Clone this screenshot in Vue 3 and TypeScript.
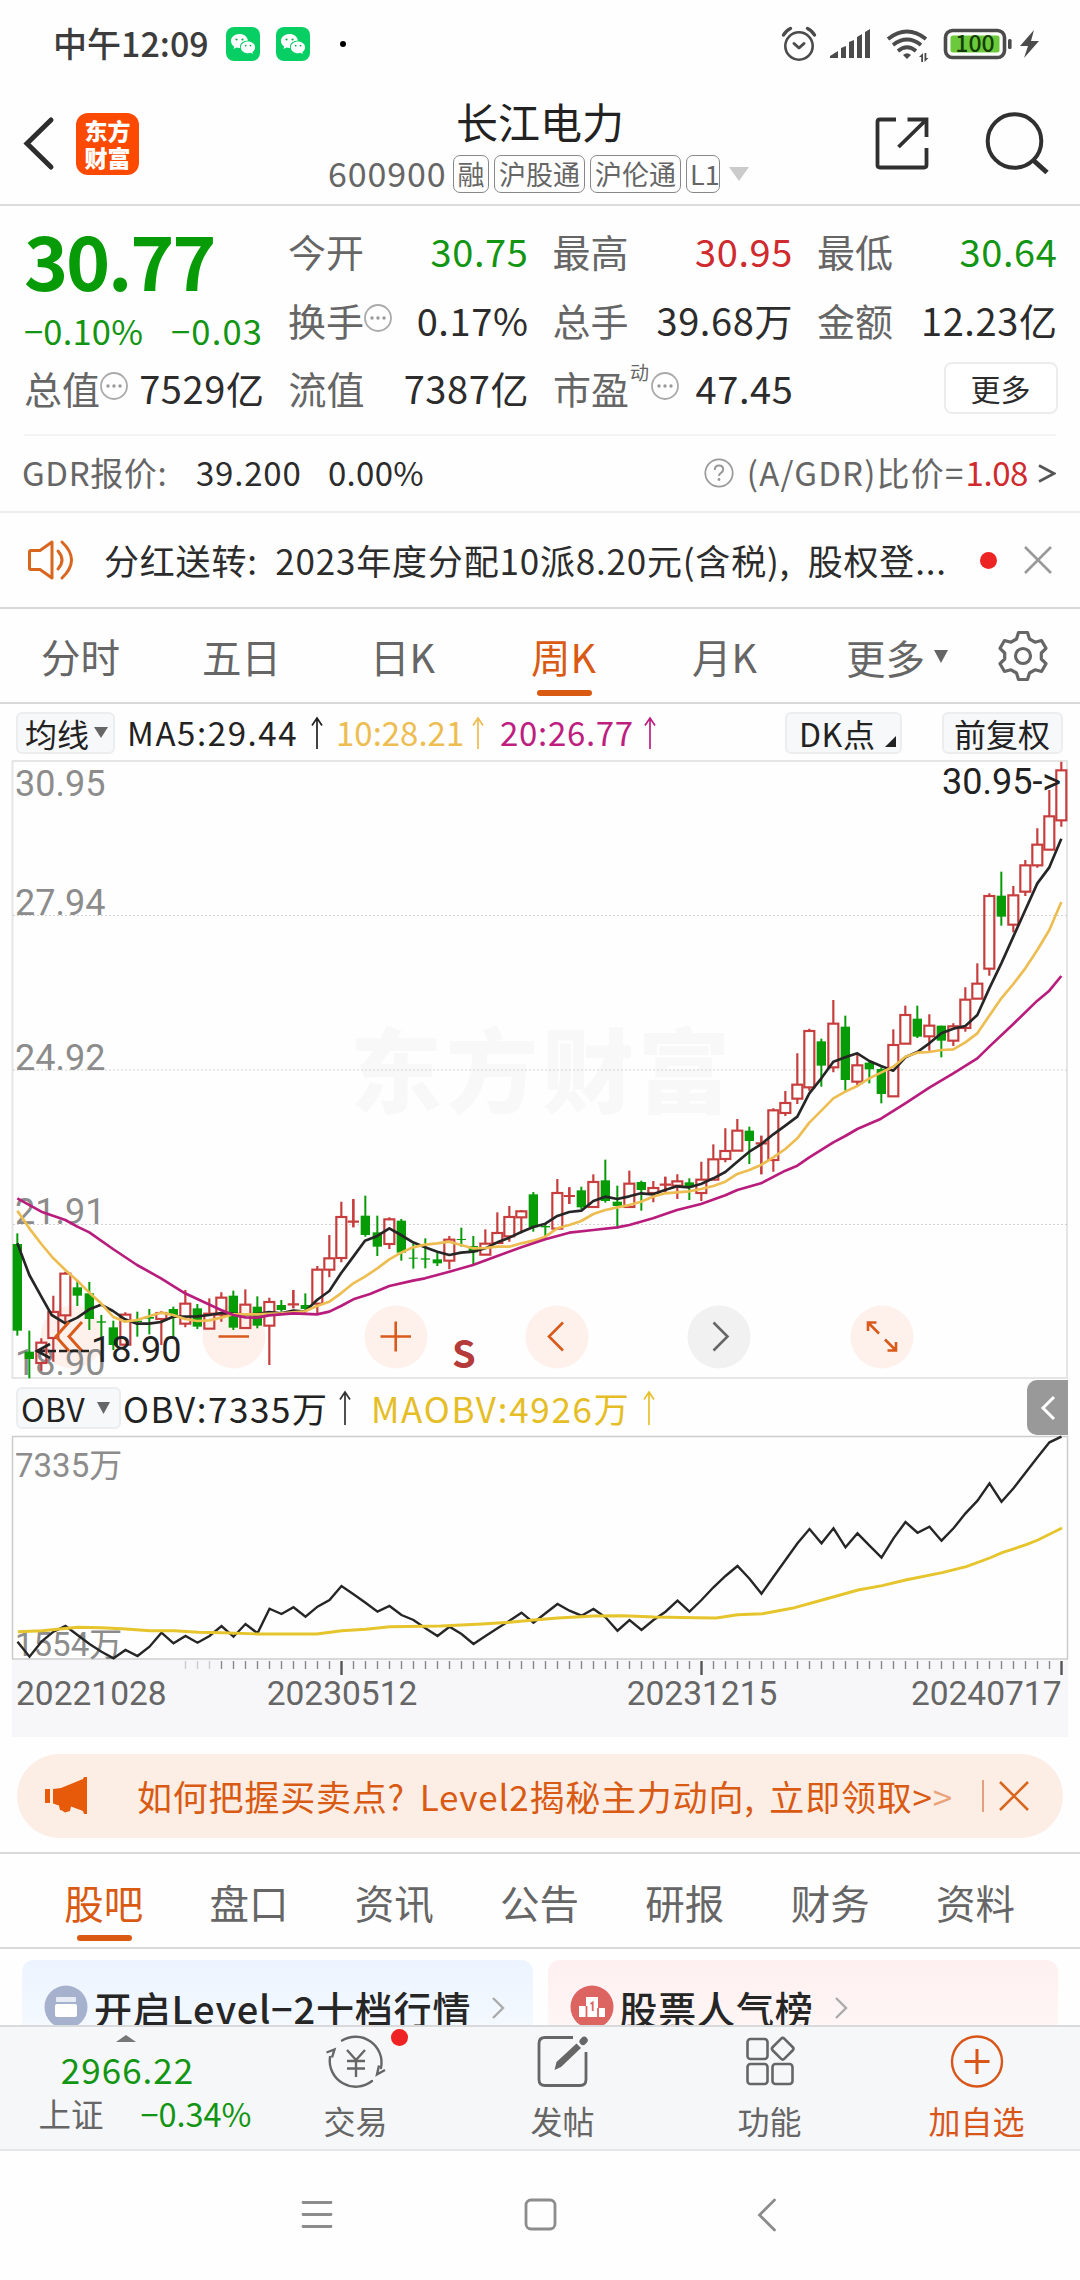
<script setup lang="ts">
type Candle = [kind: 0 | 1, high: number, top: number, bottom: number, low: number]

// kind 1 = rising week (hollow red), 0 = falling week (solid green); values are thirds of a pixel below y = 1000
const candles: Candle[] = [
  [0, 700, 732, 992, 1007], [0, 992, 1055, 1077, 1135], [1, 1015, 1027, 1090, 1112], [1, 887, 935, 1015, 1085],
  [1, 815, 820, 947, 965], [0, 842, 862, 887, 918], [0, 846, 880, 957, 990], [0, 945, 964, 968, 1020],
  [0, 962, 982, 1035, 1050], [1, 937, 943, 1035, 1040], [0, 935, 962, 966, 1010], [0, 927, 951, 956, 1003],
  [1, 933, 938, 958, 1035], [0, 920, 927, 945, 1010], [1, 870, 910, 972, 982], [0, 912, 925, 980, 987],
  [1, 895, 940, 987, 987], [1, 877, 892, 945, 965], [0, 872, 887, 983, 990], [1, 868, 913, 985, 985],
  [0, 889, 920, 977, 985], [1, 893, 905, 978, 1095], [0, 900, 915, 930, 935], [1, 870, 911, 917, 925],
  [0, 880, 915, 927, 930], [1, 798, 808, 912, 945], [1, 705, 774, 810, 832], [1, 605, 650, 775, 787],
  [1, 597, 663, 667, 682], [0, 587, 647, 705, 710], [0, 647, 697, 740, 768], [1, 652, 657, 733, 747],
  [0, 657, 662, 758, 782], [0, 730, 773, 776, 806], [0, 715, 775, 779, 805], [0, 757, 778, 790, 798],
  [1, 708, 718, 783, 808], [0, 683, 717, 720, 740], [0, 708, 738, 757, 793], [1, 688, 730, 765, 765],
  [1, 637, 698, 730, 730], [1, 618, 650, 710, 725], [1, 630, 633, 653, 700], [0, 576, 583, 682, 695],
  [0, 672, 678, 682, 715], [1, 537, 578, 687, 687], [1, 562, 586, 590, 612], [0, 560, 571, 622, 628],
  [1, 523, 545, 622, 622], [0, 479, 541, 603, 608], [0, 557, 605, 618, 685], [1, 512, 550, 622, 622],
  [0, 542, 546, 570, 632], [1, 543, 563, 580, 607], [1, 530, 552, 557, 578], [1, 523, 543, 558, 597],
  [0, 535, 547, 562, 600], [1, 485, 538, 580, 603], [1, 433, 477, 540, 540], [1, 385, 452, 478, 487],
  [1, 357, 391, 453, 453], [0, 380, 392, 423, 492], [1, 407, 428, 432, 523], [1, 325, 330, 481, 515],
  [1, 273, 308, 340, 348], [1, 160, 253, 297, 312], [1, 86, 92, 263, 272], [0, 116, 124, 197, 260],
  [1, 0, 70, 203, 217], [0, 47, 80, 240, 272], [1, 162, 195, 246, 260], [0, 185, 188, 208, 250],
  [0, 202, 207, 282, 310], [1, 88, 134, 290, 290], [1, 17, 44, 132, 132], [0, 17, 56, 110, 114],
  [1, 43, 76, 110, 152], [0, 77, 77, 122, 172], [1, 70, 78, 123, 138], [1, -38, -2, 85, 95],
  [1, -110, -50, -3, -3], [1, -320, -313, -93, -73], [0, -385, -313, -250, -223], [1, -342, -315, -225, -203],
  [1, -420, -405, -324, -312], [1, -515, -467, -403, -397], [1, -630, -552, -450, -450], [1, -715, -690, -538, -520],
]
const cx = (i: number): number => 52 + i * 36

const ma5 = '52,730 88,825 124,890 155,945 196,970 232,953 268,928 303,914 339,933 375,958 411,971 447,971 483,966 519,950 592,949 628,945 663,939 736,944 771,942 807,936 843,940 880,932 915,935 951,900 988,873 1023,820 1060,770 1095,722 1132,708 1168,685 1203,705 1239,727 1275,742 1312,755 1348,765 1383,758 1419,755 1456,745 1492,727 1528,713 1564,696 1600,681 1636,671 1672,648 1708,636 1744,632 1780,603 1816,590 1852,597 1888,589 1923,580 1959,583 1995,570 2031,559 2067,562 2103,552 2140,535 2176,516 2212,485 2248,455 2283,433 2320,403 2356,377 2392,350 2428,280 2464,235 2500,185 2536,172 2572,160 2608,183 2643,198 2680,212 2716,172 2752,156 2788,130 2824,100 2860,86 2896,78 2932,45 2968,-35 3004,-110 3040,-190 3076,-270 3112,-350 3148,-398 3184,-484'
const ma10 = '52,632 88,685 124,732 160,775 196,810 232,842 268,878 303,910 339,950 375,965 411,960 447,949 483,938 519,945 555,957 592,963 628,961 663,953 700,943 771,943 843,940 915,934 951,918 988,905 1023,880 1060,850 1095,830 1132,805 1168,778 1203,758 1239,742 1275,734 1312,730 1348,725 1383,735 1419,745 1456,744 1492,740 1528,740 1564,730 1600,722 1636,710 1672,685 1708,675 1744,663 1780,642 1816,630 1852,622 1888,615 1923,605 1959,590 1995,580 2031,577 2067,574 2103,567 2140,558 2176,545 2212,522 2248,510 2283,495 2320,472 2356,447 2392,415 2428,368 2464,332 2500,295 2536,275 2572,258 2608,235 2643,218 2680,200 2716,170 2752,158 2788,156 2824,150 2860,148 2896,127 2932,100 2968,47 3004,-5 3040,-48 3076,-95 3112,-150 3148,-210 3184,-294'
const ma20 = '52,595 124,635 196,660 232,680 268,697 339,747 411,795 483,835 555,880 592,897 663,930 700,945 736,952 771,953 807,946 880,940 951,943 988,935 1023,918 1060,898 1110,882 1168,858 1239,842 1275,835 1348,815 1419,795 1492,768 1564,742 1636,718 1708,698 1780,690 1852,682 1888,675 1959,655 2031,630 2103,612 2176,586 2212,570 2283,550 2356,512 2392,497 2428,472 2500,427 2536,408 2572,387 2643,356 2716,310 2788,263 2860,220 2932,175 2968,140 3040,72 3112,2 3148,-28 3184,-72'

const obv = [
  785, 830, 785, 755, 738, 765, 792, 815, 835, 810, 828, 800, 758, 790, 768, 788, 768, 738, 770, 732,
  760, 686, 702, 682, 710, 680, 660, 618, 643, 668, 695, 678, 705, 720, 745, 768, 740, 762, 792, 768,
  745, 722, 698, 728, 700, 672, 692, 707, 687, 712, 752, 720, 750, 720, 695, 662, 695, 660, 622, 588,
  558, 596, 641, 590, 540, 490, 447, 490, 445, 502, 460, 497, 533, 475, 426, 458, 440, 482, 445, 400,
  362, 310, 365, 325, 278, 232, 187, 170,
]
const obvPoints = obv.map((v, i) => `${(17.5 + i * 12).toFixed(1)},${(1380 + v / 3).toFixed(1)}`).join(' ')
const maobvRaw: [number, number][] = [
  [26, 755], [61, 752], [113, 742], [148, 743], [183, 747], [218, 752], [253, 752], [288, 757], [322, 758], [375, 762],
  [460, 762], [496, 752], [531, 748], [566, 740], [640, 738], [700, 732], [740, 727], [775, 720], [810, 714], [862, 708],
  [905, 707], [950, 711], [1010, 713], [1040, 714], [1071, 704], [1107, 701], [1150, 685], [1194, 660], [1246, 630],
  [1281, 617], [1315, 600], [1368, 578], [1403, 560], [1437, 534], [1455, 518], [1490, 494], [1507, 480], [1542, 444],
]
const maobvPoints = maobvRaw.map(([x, v]) => `${(x / 1.452).toFixed(1)},${(1380 + v / 3).toFixed(1)}`).join(' ')

const ticks = Array.from({ length: 74 }, (_, k) => k + 14).map((i) => ({
  x: 17.5 + i * 12,
  major: i === 27 || i === 57 || i === 87,
  faint: i < 17,
}))

const grid = [915.5, 1070, 1224.5]
const axis = [
  { t: '30.95', y: 796 }, { t: '27.94', y: 915 }, { t: '24.92', y: 1070 }, { t: '21.91', y: 1224 }, { t: '18.90', y: 1375 },
]

interface Stat { label: string; value: string; tone?: string; info?: boolean; sup?: string }
const stats: Stat[][] = [
  [
    { label: '今开', value: '30.75', tone: 'green' },
    { label: '最高', value: '30.95', tone: 'red' },
    { label: '最低', value: '30.64', tone: 'green' },
  ],
  [
    { label: '换手', value: '0.17%', info: true },
    { label: '总手', value: '39.68万' },
    { label: '金额', value: '12.23亿' },
  ],
]
const thirdRow: Stat[] = [
  { label: '总值', value: '7529亿', info: true },
  { label: '流值', value: '7387亿' },
  { label: '市盈', value: '47.45', info: true, sup: '动' },
]
const periods = ['分时', '五日', '日K', '周K', '月K']
const sections = ['股吧', '盘口', '资讯', '公告', '研报', '财务', '资料']
</script>

<template>
  <div class="screen">
    <header class="status">
      <span class="clock">中午12:09</span>
      <svg v-for="n in 2" :key="n" class="wechat" width="34" height="34" viewBox="0 0 34 34">
        <rect width="34" height="34" rx="8" fill="#07cf64" />
        <path d="M13.500 7C8.700 7 5 10 5 14c0 2.300 1.200 4.200 3.200 5.500L7.500 22l3-1.500c1 .3 2 .4 3 .4h.6C13.500 16.300 17.200 13.600 22 13.500 21.300 9.700 17.800 7 13.500 7z" fill="#fff" />
        <path d="M22 14.600c-4 0-7.100 2.600-7.100 5.800s3.100 5.800 7.100 5.800c.9 0 1.700-.1 2.500-.4l2.400 1.300-.6-2.100c1.700-1.100 2.800-2.700 2.800-4.600 0-3.200-3.100-5.800-7.100-5.800z" fill="#fff" />
        <g fill="#07a850"><circle cx="10.500" cy="12.500" r="1.100" /><circle cx="16.500" cy="12.500" r="1.100" /><circle cx="19.700" cy="18.600" r=".9" /><circle cx="24.500" cy="18.600" r=".9" /></g>
      </svg>
      <i class="status-dot"></i>
      <svg class="sys" width="262" height="38" viewBox="780 25 262 38" fill="none" stroke="#4b4b4b">
        <g stroke-width="2.600" stroke-linecap="round" stroke-linejoin="round">
          <circle cx="799" cy="46" r="13.700" />
          <path d="M794 43.500l5 4.500 5-4.500" stroke-width="3" />
          <path d="M783.500 35q2.500-4.500 7-6.500M814.500 35q-2.500-4.500-7-6.500" stroke-width="3.400" />
        </g>
        <g fill="#4b4b4b" stroke="none">
          <path d="M830 58v-2l8-5v7zM841 58V48l5-2v12zM849 58V42l5-2v18zM857 58V37l5-3v24zM865 58V32l5-3v29z" />
          <path d="M907 59l-4-4q4-3.500 8 0z" />
          <path d="M919 57l4-4v9h-1.800v-5zM924.500 53h1.800v5h2.200l-4 4z" />
        </g>
        <path d="M888 39q19-15 38 0M893 45q14-11 28 0M898 51q9-7.500 18 0" stroke-width="3.800" />
        <rect x="945.500" y="30.500" width="59" height="27" rx="7" stroke-width="3.600" />
        <rect x="950.500" y="35.500" width="49" height="17" rx="2.500" fill="#6cc93c" stroke="none" />
        <rect x="1008" y="39" width="3.600" height="10" rx="1.500" fill="#4b4b4b" stroke="none" />
        <text x="975" y="52.300" text-anchor="middle" class="batt">100</text>
        <path d="M1034 30l-14 16h8l-4 12 15-17h-8z" fill="#4b4b4b" stroke="none" />
      </svg>
    </header>

    <header class="title-bar">
      <svg class="back" width="36" height="56" viewBox="0 0 36 56" fill="none" stroke="#2d2d2d" stroke-width="5"><path d="M31 5L7 28.500 31 52" stroke-linecap="round" /></svg>
      <div class="logo"><span>东方</span><span>财富</span></div>
      <div class="title">
        <h1>长江电力</h1>
        <div class="code">
          <span class="num">600900</span>
          <b>融</b><b>沪股通</b><b>沪伦通</b><b>L1</b>
          <svg width="20" height="14" viewBox="0 0 20 14"><path d="M0 0h20L10 14z" fill="#cbcbcb" /></svg>
        </div>
      </div>
      <svg class="tools" width="176" height="66" viewBox="874 110 176 66" fill="none" stroke="#303030">
        <path d="M896 119.500H880q-2.500 0-2.500 2.500v43q0 2.500 2.500 2.500h44q2.500 0 2.500-2.500V148M907.500 119.500h19V137M926 120l-27.500 27" stroke-width="3.800" />
        <circle cx="1014.500" cy="141" r="26.800" stroke-width="4" />
        <path d="M1033 160l14 12.500" stroke-width="5" />
      </svg>
    </header>

    <section class="quote">
      <div class="row-top">
        <div class="last">
          <strong>30.77</strong>
          <div class="chg"><span>−0.10%</span><span>−0.03</span></div>
        </div>
        <div class="mini">
          <template v-for="(row, r) in stats" :key="r">
            <div v-for="s in row" :key="s.label" class="stat">
              <span class="lab">{{ s.label }}</span>
              <svg v-if="s.info" class="info" width="30" height="30" viewBox="0 0 30 30"><circle cx="15" cy="15" r="13" fill="none" stroke="#aaa" stroke-width="1.800" /><g fill="#999"><circle cx="9" cy="15" r="1.700" /><circle cx="15" cy="15" r="1.700" /><circle cx="21" cy="15" r="1.700" /></g></svg>
              <span class="val" :class="s.tone">{{ s.value }}</span>
            </div>
          </template>
        </div>
      </div>
      <div class="row-third">
        <div v-for="s in thirdRow" :key="s.label" class="stat">
          <span class="lab">{{ s.label }}</span>
          <sup v-if="s.sup">{{ s.sup }}</sup>
          <svg v-if="s.info" class="info" width="30" height="30" viewBox="0 0 30 30"><circle cx="15" cy="15" r="13" fill="none" stroke="#aaa" stroke-width="1.800" /><g fill="#999"><circle cx="9" cy="15" r="1.700" /><circle cx="15" cy="15" r="1.700" /><circle cx="21" cy="15" r="1.700" /></g></svg>
          <span class="val">{{ s.value }}</span>
        </div>
        <button class="more">更多</button>
      </div>
    </section>

    <section class="gdr">
      <span class="g1">GDR报价:</span><span class="g2">39.200</span><span class="g3">0.00%</span>
      <svg class="q" width="30" height="30" viewBox="0 0 30 30" fill="none" stroke="#999"><circle cx="15" cy="15" r="13.700" stroke-width="1.700" /><path d="M10.800 12q0-4.500 4.200-4.500t4.200 3.900q0 2-2.200 3.400-2 1.300-2 3.200" stroke-width="2" /><circle cx="15" cy="21.500" r="1.400" fill="#999" stroke="none" /></svg>
      <span class="g4">(A/GDR)比价=</span><span class="g5">1.08</span>
      <svg class="gt" width="18" height="22" viewBox="0 0 18 22" fill="none" stroke="#555" stroke-width="2.600"><path d="M1 2.500L16 10.500 1 18.500" /></svg>
    </section>

    <section class="notice">
      <svg class="horn" width="50" height="44" viewBox="0 0 50 44" fill="none" stroke="#d9661f" stroke-width="3" stroke-linejoin="round"><path d="M3 12.500h9L24 4v36L12 31.500H3q-1.500 0-1.500-1.500V14q0-1.500 1.500-1.500z" /><path d="M12 12.500v19" stroke-width="2" opacity="0" /><path d="M30 13q8 9 0 18M34 4q19 18 0 36" stroke-linecap="round" /></svg>
      <span class="ntext">分红送转: 2023年度分配10派8.20元(含税), 股权登...</span>
      <i class="red-dot"></i>
      <svg class="x" width="28" height="28" viewBox="0 0 28 28" stroke="#999" stroke-width="2.600"><path d="M1 1l26 26M27 1L1 27" /></svg>
    </section>

    <nav class="periods">
      <span v-for="p in periods" :key="p" :class="{ on: p === '周K' }">{{ p }}</span>
      <span class="pm">更多<svg width="14" height="13" viewBox="0 0 14 13"><path d="M0 0h14L7 13z" fill="#666" /></svg></span>
      <svg class="gear" width="50" height="52" viewBox="0 0 50 52" fill="none" stroke="#666" stroke-width="3.200" stroke-linejoin="round"><path d="M20.500 2.500h9l2 6.500 5.500 3.200 6.500-1.700 4.500 7.800-4.700 4.700v6l4.700 4.700-4.500 7.800-6.500-1.700-5.500 3.200-2 6.500h-9l-2-6.500-5.500-3.200-6.500 1.700L2 33.700 6.700 29v-6L2 18.300l4.500-7.800 6.500 1.700L18.500 9z" /><circle cx="25" cy="26" r="7.500" /></svg>
    </nav>

    <div class="ma-row">
      <span class="pill p-ma">均线<svg width="14" height="11" viewBox="0 0 14 11"><path d="M0 0h14L7 11z" fill="#666" /></svg></span>
      <span class="m5">MA5:29.44</span>
      <svg class="up u1" width="12" height="34" viewBox="0 0 12 34" fill="none" stroke="#222" stroke-width="1.700"><path d="M6 33V2M1 9.500L6 2l5 7.500" /></svg>
      <span class="m10">10:28.21</span>
      <svg class="up u2" width="12" height="34" viewBox="0 0 12 34" fill="none" stroke="#edbd52" stroke-width="1.700"><path d="M6 33V2M1 9.500L6 2l5 7.500" /></svg>
      <span class="m20">20:26.77</span>
      <svg class="up u3" width="12" height="34" viewBox="0 0 12 34" fill="none" stroke="#bd1e80" stroke-width="1.700"><path d="M6 33V2M1 9.500L6 2l5 7.500" /></svg>
      <span class="pill p-dk">DK点<svg width="11" height="11" viewBox="0 0 11 11"><path d="M11 0v11H0z" fill="#222" /></svg></span>
      <span class="pill p-fq">前复权</span>
    </div>

    <svg class="chart" width="1080" height="624" viewBox="0 758 1080 624">
      <g stroke="#e5e5e5" stroke-width="2" fill="none"><rect x="12.500" y="761" width="1054.500" height="617" /></g>
      <text x="350" y="1106" class="wm">东方财富</text>
      <line v-for="g in grid" :key="g" x1="13" x2="1067" :y1="g" :y2="g" stroke="#d2d2d2" stroke-width="1.200" stroke-dasharray="2 2" />
      <g>
        <circle v-for="c in [72, 234, 396, 557, 882]" :key="c" :cx="c" cy="1337" r="31.500" fill="#fef1eb" />
        <circle cx="719" cy="1337" r="31.500" fill="#f1f1f1" />
      </g>
      <text v-for="a in axis" :key="a.t" x="15" :y="a.y" class="ax">{{ a.t }}</text>
      <g transform="translate(0 1000) scale(.33333)">
        <template v-for="(c, i) in candles" :key="i">
          <g v-if="c[0]" stroke="#c73c3c" stroke-width="6.500" fill="none">
            <path :d="`M${cx(i)} ${c[1]}V${c[2]}M${cx(i)} ${c[3]}V${c[4]}`" />
            <rect v-if="c[3] - c[2] > 8" :x="cx(i) - 15" :y="c[2] + 1" width="30" :height="c[3] - c[2] - 2" />
            <path v-else :d="`M${cx(i) - 17} ${c[2] + 2}h34M${cx(i)} ${c[1]}V${c[4]}`" />
          </g>
          <g v-else fill="#079c07">
            <rect :x="cx(i) - 3" :y="c[1]" width="6" :height="c[4] - c[1]" />
            <rect :x="cx(i) - 14" :y="c[2]" width="28" :height="c[3] - c[2]" />
          </g>
        </template>
        <g fill="none" stroke-width="8" stroke-linejoin="round">
          <polyline :points="ma5" stroke="#262626" />
          <polyline :points="ma10" stroke="#edbd52" />
          <polyline :points="ma20" stroke="#b81c7c" />
        </g>
      </g>
      <g fill="none" stroke="#d95a1b" stroke-width="2.600">
        <path d="M69 1322l-13 14.500 13 14.500M82 1322l-13 14.500 13 14.500" stroke-width="3" />
        <path d="M218.500 1336.500h30.500M380.500 1336.500h30.500M395.700 1321.500v30M563 1322.500l-14 14 14 14" />
        <path d="M868 1331v-8.500h8.500M869 1323.500l10 10M896 1342v8.500h-8.500M895 1349.500l-10-10" />
      </g>
      <path d="M713.500 1322.500l14 14-14 14" fill="none" stroke="#666" stroke-width="2.600" />
      <path d="M50 1344l-13 7 13 7" fill="none" stroke="#222" stroke-width="2.600" />
      <path d="M37 1351h54" stroke="#222" stroke-width="2.400" stroke-dasharray="8 3" />
      <text x="91" y="1362" class="ax dark">18.90</text>
      <text x="942" y="794" class="ax dark">30.95-&gt;</text>
      <text x="452" y="1367.500" class="s">S</text>
    </svg>

    <div class="obv-row">
      <span class="pill p-obv">OBV<svg width="13" height="12" viewBox="0 0 13 12"><path d="M0 0h13L6.500 12z" fill="#666" /></svg></span>
      <span class="o1">OBV:7335万</span>
      <svg class="up u4" width="12" height="36" viewBox="0 0 12 36" fill="none" stroke="#333" stroke-width="1.700"><path d="M6 35V2M1 9.500L6 2l5 7.500" /></svg>
      <span class="o2">MAOBV:4926万</span>
      <svg class="up u5" width="12" height="36" viewBox="0 0 12 36" fill="none" stroke="#e9c02c" stroke-width="1.700"><path d="M6 35V2M1 9.500L6 2l5 7.500" /></svg>
      <span class="fold"><svg width="16" height="26" viewBox="0 0 16 26" fill="none" stroke="#fff" stroke-width="3"><path d="M14 2L3 13l11 11" /></svg></span>
    </div>

    <svg class="obv" width="1080" height="303" viewBox="0 1435 1080 303">
      <rect x="12" y="1660" width="1056" height="77" fill="#f7f7f9" />
      <rect x="12.500" y="1436.500" width="1055" height="222.500" fill="none" stroke="#ccc" stroke-width="1.500" />
      <text x="15" y="1476.500" class="ax cj">7335万</text>
      <text x="15" y="1655.500" class="ax cj">1554万</text>
      <polyline :points="obvPoints" fill="none" stroke="#262626" stroke-width="2.400" />
      <polyline :points="maobvPoints" fill="none" stroke="#e6c52c" stroke-width="2.900" />
      <line v-for="t in ticks" :key="t.x" :x1="t.x" :x2="t.x" y1="1661" :y2="t.major ? 1675 : 1669" :stroke="t.faint ? '#ccc' : t.major ? '#555' : '#888'" :stroke-width="t.major ? 2.4 : 1.4" />
      <text x="16" y="1705" class="date">20221028</text>
      <text x="342" y="1705" class="date" text-anchor="middle">20230512</text>
      <text x="702" y="1705" class="date" text-anchor="middle">20231215</text>
      <text x="1061.500" y="1705" class="date" text-anchor="end">20240717</text>
    </svg>

    <aside class="banner">
      <svg class="mega" width="42" height="38" viewBox="0 0 42 38" fill="#e65a0a"><path d="M0 12h5v14H0zM8 12l8-1L38 2l1-2h3v37h-3l-1-3-12-4.500-1 4.500-5 1.500-3-2-2-.5-1-4.500-6-2z" /></svg>
      <span class="btext">如何把握买卖点? Level2揭秘主力动向, 立即领取<em>&gt;</em><em class="dim">&gt;</em></span>
      <i class="bar"></i>
      <svg class="bx" width="30" height="30" viewBox="0 0 30 30" stroke="#d9661f" stroke-width="2.600"><path d="M1 1l28 28M29 1L1 29" /></svg>
    </aside>

    <nav class="sections">
      <span v-for="s in sections" :key="s" :class="{ on: s === '股吧' }">{{ s }}</span>
    </nav>

    <section class="cards">
      <div class="card blue">
        <svg width="44" height="44" viewBox="0 0 44 44"><circle cx="22" cy="22" r="21.500" fill="#a6b1cd" /><rect x="12" y="12" width="20" height="5" rx="1" fill="#e6ebf5" /><rect x="11" y="19" width="22" height="13" rx="2" fill="#fff" /></svg>
        <strong>开启Level−2十档行情</strong>
        <svg width="13" height="22" viewBox="0 0 13 22" fill="none" stroke="#aaa" stroke-width="2.400"><path d="M1 1l10 10L1 21" /></svg>
      </div>
      <div class="card pink">
        <svg width="44" height="44" viewBox="0 0 44 44"><circle cx="22" cy="22" r="21.500" fill="#dc6461" /><path d="M9 32V21h7V12h12v11h7v9z" fill="#fff" /><path d="M16.500 21v11M28 23v9M20.500 19l2.200-1.500V26" stroke="#dc6461" stroke-width="1.800" fill="none" /></svg>
        <strong>股票人气榜</strong>
        <svg width="13" height="22" viewBox="0 0 13 22" fill="none" stroke="#aaa" stroke-width="2.400"><path d="M1 1l10 10L1 21" /></svg>
      </div>
    </section>

    <footer class="dock">
      <div class="index">
        <svg width="20" height="7" viewBox="0 0 20 7"><path d="M0 7L10 0l10 7z" fill="#777" /></svg>
        <b>2966.22</b>
        <div><span>上证</span><em>−0.34%</em></div>
      </div>
      <div class="item">
        <svg width="62" height="56" viewBox="0 0 62 56" fill="none" stroke="#666" stroke-width="2.400"><path d="M17 6.500A26 26 0 0 1 56 34M5 23A26 26 0 0 0 47 47" stroke-linecap="round" /><path d="M1.500 18.500l8-3-2.500 8M60 36l-8 4.500 2-9" /><path d="M22 16l9 10 9-10M31 26v17M22 27h18M22 34.500h18" /></svg>
        <i class="badge"></i>
        <span>交易</span>
      </div>
      <div class="item">
        <svg width="52" height="56" viewBox="0 0 52 56" fill="none" stroke="#666" stroke-width="2.800"><path d="M36 3.500H8q-6 0-6 6v36q0 6 6 6h35q6 0 6-6V18" /><path d="M17.500 36l2-8L39.500 9.500l4.500 4.500-20 19z" fill="#666" stroke="none" /><path d="M46 7.500l1.200-1.200" stroke-width="7" stroke-linecap="round" /></svg>
        <span>发帖</span>
      </div>
      <div class="item">
        <svg width="50" height="56" viewBox="0 0 50 56" fill="none" stroke="#666" stroke-width="2.600"><rect x="2.500" y="5" width="20" height="20" rx="3" /><rect x="2.500" y="30" width="20" height="20" rx="3" /><rect x="27.500" y="30" width="20" height="20" rx="3" /><rect x="29.500" y="6.500" width="16.500" height="16.500" rx="2.500" transform="rotate(45 37.700 14.700)" /></svg>
        <span>功能</span>
      </div>
      <div class="item add">
        <svg width="54" height="56" viewBox="0 0 54 56" fill="none" stroke="#d9561b" stroke-width="2.400"><circle cx="27" cy="27.500" r="25" /><path d="M14.500 27.500h25M27 15v25" stroke-width="3" /></svg>
        <span>加自选</span>
      </div>
    </footer>

    <footer class="sysnav">
      <svg width="480" height="34" viewBox="300 2198 480 34" fill="none" stroke="#8c8c8c" stroke-width="2.800" stroke-linecap="round">
        <path d="M303 2202.500h28M303 2214.500h28M303 2226.500h28" />
        <rect x="526" y="2200" width="29" height="29" rx="5" />
        <path d="M774.500 2200l-15 15 15 15" />
      </svg>
    </footer>
  </div>
</template>

<style>
body { margin: 0; background: #fff; }
</style>

<style scoped>
.screen { width: 1080px; height: 2280px; overflow: hidden; display: flex; flex-direction: column; background: #fefefe; color: #2c2c2c; font-family: "Noto Sans CJK SC", "Noto Sans", sans-serif; line-height: 1; white-space: nowrap; }
.screen > * { flex: none; box-sizing: border-box; }
svg { display: block; flex: none; }
h1, strong, b, em { font-weight: 400; font-style: normal; margin: 0; }
.green { color: #129512; }
.red { color: #cf2a2d; }

.status { height: 88px; display: flex; align-items: center; padding-left: 53px; }
.clock { font-size: 34px; font-weight: 500; color: #3c3c3c; width: 173px; margin-top: -2px; }
.wechat { margin-right: 16px; }
.status-dot { width: 6px; height: 6px; border-radius: 50%; background: #000; margin-left: 14px; }
.sys { margin-left: auto; margin-right: 38px; }
.batt { font: 500 23px "Noto Sans CJK SC", sans-serif; fill: #123d05; stroke: none; }

.title-bar { height: 118px; border-bottom: 2px solid #dcdcdc; display: flex; align-items: flex-start; padding: 0 30px 0 20px; }
.back { margin-top: 27px; }
.logo { margin: 25px 0 0 20px; width: 63px; height: 62px; border-radius: 12px; background: #fc4a03; color: #fff; font-size: 23px; font-weight: 900; display: flex; flex-direction: column; align-items: center; justify-content: center; gap: 4px; }
.title { width: 430px; margin: 12px 0 0 186px; }
h1 { font-size: 42px; color: #222; margin-left: 131px; line-height: 42px; }
.code { display: flex; align-items: center; margin-top: 13px; height: 38px; color: #666; margin-left: 3px; }
.num { font-size: 34px; width: 125px; letter-spacing: .9px; margin-top: -3px; }
.code b { font-size: 27px; border: 1.500px solid #888; border-radius: 7px; height: 38px; box-sizing: border-box; padding: 4px 3px; margin-right: 5px; color: #666; width: 91px; text-align: center; }
.code b:nth-of-type(1) { width: 36px; }
.code b:nth-of-type(4) { width: 34px; }
.code svg { margin-left: 4px; }
.tools { margin: 22px 0 0 auto; }

.quote { height: 230px; margin: 0 24px; border-bottom: 2px solid #f4f4f4; }
.row-top { display: flex; height: 148px; }
.last { width: 265px; }
.last strong { display: block; font-size: 75px; font-weight: 700; color: #079c07; line-height: 75px; margin-top: 15px; letter-spacing: -2.200px; }
.chg { display: flex; width: 245px; font-size: 34.500px; color: #129512; margin-top: 17px; }
.chg span:first-child { width: 147px; letter-spacing: .2px; }
.chg span:last-child { letter-spacing: 1.200px; }
.mini { display: grid; grid-template-columns: repeat(3, 239px); column-gap: 25.500px; grid-template-rows: 69px 69px; padding-top: 12px; }
.row-third { display: grid; grid-template-columns: repeat(4, 239px); column-gap: 25.500px; height: 66px; }
.stat { display: flex; align-items: center; font-size: 38px; }
.row-third .stat { height: 70px; }
.lab { color: #666; margin-top: -3px; margin-right: -2px; }
.info { margin: -7px 0 0 1px; }
.val { margin: -3px -1.500px 0 auto; letter-spacing: .6px; }
sup { font-size: 19px; color: #666; align-self: flex-start; margin: 8px 0 0 3px; line-height: 19px; }
.more { font: 30px "Noto Sans CJK SC", sans-serif; width: 114px; height: 52px; margin: 8px 0 0 126px; padding: 0; background: #fff; border: 2px solid #ececec; border-radius: 8px; color: #2c2c2c; }

.gdr { height: 77px; border-bottom: 2px solid #eee; display: flex; align-items: center; font-size: 33px; padding: 0 24px 2px 22px; }
.g1 { color: #666; width: 174px; letter-spacing: .6px; } .g2 { width: 132px; letter-spacing: .8px; } .g3 { letter-spacing: .3px; } .g4 { color: #666; margin-left: 13px; letter-spacing: 1.200px; } .g5 { color: #cf2a2d; margin-left: 1px; letter-spacing: -.4px; }
.q { margin-left: auto; } .gt { margin: 3px 0 0 10px; }

.notice { height: 96px; border-bottom: 2px solid #d9d9d9; display: flex; align-items: center; padding-left: 28px; }
.ntext { font-size: 35px; margin-left: 26px; width: 876px; margin-top: -2px; letter-spacing: .8px; word-spacing: 9px; }
.red-dot { width: 17px; height: 17px; border-radius: 50%; background: #ed2424; margin-right: 27px; }

.periods { height: 95px; border-bottom: 2px solid #d9d9d9; display: flex; align-items: flex-start; color: #666; font-size: 39.500px; }
.periods > span { width: 161px; height: 94px; line-height: 93px; text-align: center; position: relative; }
.periods .on { color: #d95a12; }
.on::after { content: ""; position: absolute; left: 50%; margin-left: -27px; width: 55px; height: 6px; border-radius: 3px; bottom: 7px; background: #d95a12; }
.periods .pm { width: 145px; margin-left: 25px; display: flex; align-items: center; padding-left: 16px; gap: 9px; box-sizing: border-box; }
.gear { margin: 21px 0 0 23px; }

.ma-row, .obv-row { display: flex; align-items: center; font-size: 33px; color: #222; }
.ma-row { height: 54px; padding: 3px 0 0 16px; }
.pill { height: 42px; box-sizing: border-box; background: #f6f8fa; border: 2px solid #ebedef; border-radius: 6px; display: flex; align-items: center; padding-left: 7px; gap: 5px; color: #222; }
.p-ma { width: 99px; font-size: 32px; }
.m5 { margin-left: 12px; width: 184px; letter-spacing: 1.600px; } .m10 { color: #edbd52; margin-left: 13px; width: 136px; } .m20 { color: #bd1e80; margin-left: 16px; width: 144px; letter-spacing: .7px; }
.p-dk { margin-left: 129px; width: 117px; font-size: 32px; padding-left: 12px; gap: 9px; letter-spacing: .6px; } .p-dk svg { margin-top: 18px; }
.p-fq { width: 121px; margin-left: 40px; font-size: 32px; padding-left: 10px; }

.ax { font: 36px Roboto, sans-serif; fill: #8c8c8c; }
.dark { fill: #222; }
.s { font: 700 38px "Noto Sans CJK SC", sans-serif; fill: #b53a3a; }
.wm { font: 900 92px "Noto Sans CJK SC", sans-serif; fill: #f8f8f8; letter-spacing: 4px; }
.cj { font-family: Roboto, "Noto Sans CJK SC", sans-serif; font-size: 33px; }
.date { font: 33.500px Roboto, sans-serif; fill: #666; }

.obv-row { height: 55px; padding-left: 16px; font-size: 35px; margin-top: -2px; }
.p-obv { width: 105px; font-size: 32px; padding-left: 3px; gap: 12px; letter-spacing: .3px; }
.o1 { margin-left: 2px; width: 216px; letter-spacing: 1.600px; } .o2 { color: #e5bd25; width: 272px; margin-left: 20px; letter-spacing: 1.700px; }
.fold { margin-left: auto; margin-right: 12px; width: 41px; height: 55px; background: #999; border-radius: 10px 0 0 10px; display: flex; align-items: center; justify-content: center; }

.banner { margin: 16px 17px 0; height: 84px; border-radius: 42px; background: #fceee5; display: flex; align-items: center; padding-left: 28px; color: #d95a12; }
.btext { font-size: 35px; margin-left: 50px; width: 845px; margin-top: -2px; letter-spacing: .8px; word-spacing: 6px; }
.dim { opacity: .5; }
.bar { width: 2px; height: 32px; background: #e2a27e; margin-right: 15px; }

.sections { margin-top: 14px; height: 97px; border-top: 2px solid #d9d9d9; border-bottom: 2px solid #d9d9d9; display: flex; padding-left: 31px; font-size: 39.500px; color: #666; }
.sections span { width: 145.300px; height: 93px; line-height: 95px; text-align: center; position: relative; }
.sections .on { color: #d95a12; }
.sections .on::after { bottom: 6px; }

.cards { height: 76px; display: flex; gap: 15px; padding: 11px 22px 0; overflow: hidden; }
.card { width: 511px; height: 130px; border-radius: 12px; display: flex; align-items: flex-start; padding: 25px 0 0 22px; box-sizing: border-box; }
.blue { background: linear-gradient(#ecf4ff, #f6faff 80px); }
.pink { background: linear-gradient(#fef0f0, #fff7f6 80px); }
.card strong { font-size: 38px; font-weight: 500; line-height: 45px; margin: 0 21px 0 6px; color: #262626; letter-spacing: .8px; }
.card svg:last-child { margin-top: 12px; }

.dock { height: 126px; border-top: 2px solid #d8dadc; border-bottom: 2px solid #e4e6e8; background: #f6f7f9; display: flex; position: relative; z-index: 1; }
.index { width: 252px; display: flex; flex-direction: column; align-items: center; padding-top: 8px; box-sizing: border-box; color: #129512; }
.index b { font-size: 35px; line-height: 35px; margin-top: 9px; letter-spacing: 1px; margin-left: 3px; }
.index div { display: flex; width: 213px; justify-content: space-between; font-size: 32.500px; margin: 11px 0 0 38px; }
.index span { color: #666; }
.item { width: 207px; display: flex; flex-direction: column; align-items: center; padding-top: 7px; box-sizing: border-box; color: #666; font-size: 32px; position: relative; }
.item span { margin-top: 14px; }
.badge { position: absolute; left: 139px; top: 2px; width: 17px; height: 17px; border-radius: 50%; background: #ee2222; }
.add { color: #d9561b; }
.sysnav { height: 129px; padding: 47px 0 0 300px; }
</style>
